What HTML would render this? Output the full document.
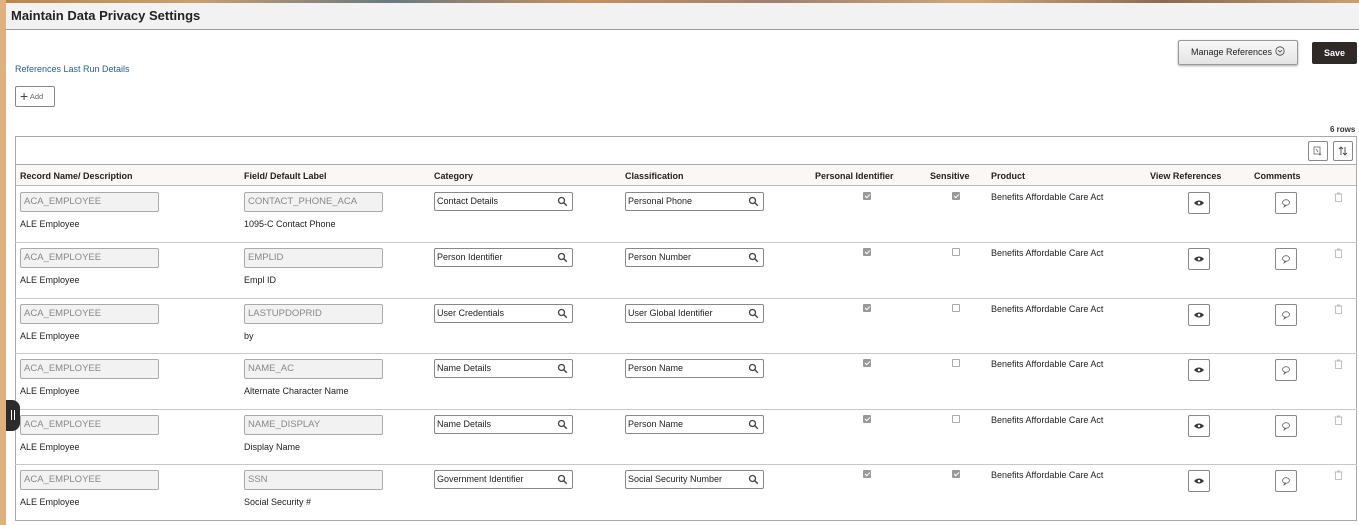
<!DOCTYPE html>
<html><head><meta charset="utf-8"><style>
*{box-sizing:border-box}
body{margin:0;width:1359px;height:525px;overflow:hidden;background:#fff;font-family:"Liberation Sans",Arial,sans-serif;font-size:9px;color:#222;position:relative}
.a{position:absolute}
.strip{left:0;top:0;width:6px;height:525px;background:#deb27e}
.topimg{left:0;top:0;width:1359px;height:3px;background:linear-gradient(90deg,#b8864a,#c9a070,#6a7a80,#c49060,#a08070,#d0a878,#8a6a50,#c8a070)}
.hdr{left:6px;top:3px;width:1353px;height:27px;background:#f2f2f2;border-bottom:1px solid #9a9a9a}
.title{left:11px;top:8px;font-size:13px;font-weight:bold;color:#222}
.inp{position:absolute;height:20px;border:1px solid #aaa;border-radius:2px;background:#f2f2f2;color:#888;font-size:9.5px;padding:3px 3px;width:139px}
.sel{position:absolute;height:19px;border:1px solid #888;border-radius:2px;background:#fff;color:#222;font-size:9px;padding:3px 2px;width:139px}
.sel svg{position:absolute;right:4px;top:3px}
.cb{position:absolute;width:8px;height:8px;border:1px solid #aaa;border-radius:1px;background:#fff}
.cb.on{background:#999;border-color:#999}
.cb.on:after{content:"";position:absolute;left:2px;top:0px;width:2px;height:4px;border:solid #fff;border-width:0 1px 1px 0;transform:rotate(45deg)}
.btn{position:absolute;width:22px;height:22px;border:1px solid #888;border-radius:2px;background:#fff}
.th{position:absolute;top:171px;font-weight:bold;font-size:9px;color:#222}
.line{position:absolute;left:15px;width:1342px;height:1px;background:#c8c8c8}
</style></head><body>
<div class="a topimg"></div>
<div class="a strip"></div>
<div class="a hdr"></div>
<div class="a title">Maintain Data Privacy Settings</div>
<div class="a" style="left:1178px;top:40px;width:120px;height:25px;border:1px solid #999;border-radius:2px;background:linear-gradient(#f8f8f8,#e4e4e4);box-shadow:0 1px 2px #aaa;font-size:9px;padding:5px 0 0 12px;white-space:nowrap">Manage References <svg width="10" height="10" viewBox="0 0 10 10" style="vertical-align:-1px"><circle cx="5" cy="5" r="4.2" fill="none" stroke="#444" stroke-width="0.8"/><path d="M3 4.2l2 2 2-2" fill="none" stroke="#444" stroke-width="0.8"/></svg></div>
<div class="a" style="left:1312px;top:42px;width:45px;height:22px;background:#2f2a27;border-radius:2px;color:#fff;font-weight:bold;font-size:9px;text-align:center;line-height:22px">Save</div>
<div class="a" style="left:15px;top:64px;color:#2a5d8c;font-size:9px">References Last Run Details</div>
<div class="a" style="left:15px;top:86px;width:40px;height:21px;border:1px solid #888;border-radius:2px;font-size:7.5px;color:#666;padding:4px 0 0 4px"><span style="font-size:14px;color:#444;vertical-align:-2px;line-height:10px">+</span> Add</div>
<div class="a" style="left:1330px;top:125px;font-size:8px;font-weight:bold;color:#333">6 rows</div>
<div class="a" style="left:15px;top:136px;width:1342px;height:385px;border:1px solid #aaa;border-top:1px solid #aaa"></div>
<div class="a" style="left:16px;top:164px;width:1340px;height:22px;background:#faf8f6;border-top:1px solid #aaa;border-bottom:1px solid #bbb"></div>
<div class="btn" style="left:1308px;top:141px;width:20px;height:20px"><svg width="18" height="18" viewBox="0 0 18 18"><rect x="5" y="5" width="6" height="7" fill="none" stroke="#666" stroke-width="0.8"/><path d="M7 7l2 3M11 10v3M10 12l1 1 1-1" stroke="#666" fill="none" stroke-width="0.8"/></svg></div>
<div class="btn" style="left:1333px;top:141px;width:20px;height:20px"><svg width="18" height="18" viewBox="0 0 18 18"><path d="M7 5v8M5 7l2-2 2 2M11 5v8M9 11l2 2 2-2" stroke="#444" fill="none" stroke-width="0.9"/></svg></div>
<div class="th" style="left:20px">Record Name/ Description</div>
<div class="th" style="left:244px">Field/ Default Label</div>
<div class="th" style="left:434px">Category</div>
<div class="th" style="left:625px">Classification</div>
<div class="th" style="left:815px">Personal Identifier</div>
<div class="th" style="left:930px">Sensitive</div>
<div class="th" style="left:991px">Product</div>
<div class="th" style="left:1150px">View References</div>
<div class="th" style="left:1254px">Comments</div>
<div id="rows"></div>
<div class="a" style="left:6px;top:400px;width:14px;height:31px;background:#2b2b2b;border-radius:0 8px 8px 0"><div style="position:absolute;left:5px;top:10px;width:1px;height:10px;background:#fff"></div><div style="position:absolute;left:8px;top:10px;width:1px;height:10px;background:#fff"></div></div>
<script>
var d=[["CONTACT_PHONE_ACA","1095-C Contact Phone","Contact Details","Personal Phone",1],
["EMPLID","Empl ID","Person Identifier","Person Number",0],
["LASTUPDOPRID","by","User Credentials","User Global Identifier",0],
["NAME_AC","Alternate Character Name","Name Details","Person Name",0],
["NAME_DISPLAY","Display Name","Name Details","Person Name",0],
["SSN","Social Security #","Government Identifier","Social Security Number",1]];
var mag='<svg width="11" height="11" viewBox="0 0 11 11"><circle cx="4.5" cy="4.5" r="3" fill="none" stroke="#444" stroke-width="1.3"/><path d="M6.8 6.8l3 3" stroke="#444" stroke-width="1.4"/></svg>';
var h='';var tops=[186,242,298,353,409,464];
for(var i=0;i<6;i++){var t=tops[i];
if(i>0)h+='<div class="line" style="top:'+t+'px"></div>';
h+='<div class="inp" style="left:20px;top:'+(t+6)+'px">ACA_EMPLOYEE</div>';
h+='<div class="a" style="left:20px;top:'+(t+33)+'px">ALE Employee</div>';
h+='<div class="inp" style="left:244px;top:'+(t+6)+'px">'+d[i][0]+'</div>';
h+='<div class="a" style="left:244px;top:'+(t+33)+'px">'+d[i][1]+'</div>';
h+='<div class="sel" style="left:434px;top:'+(t+6)+'px">'+d[i][2]+mag+'</div>';
h+='<div class="sel" style="left:625px;top:'+(t+6)+'px">'+d[i][3]+mag+'</div>';
h+='<div class="cb on" style="left:863px;top:'+(t+6)+'px"></div>';
h+='<div class="cb'+(d[i][4]?' on':'')+'" style="left:952px;top:'+(t+6)+'px"></div>';
h+='<div class="a" style="left:991px;top:'+(t+6)+'px">Benefits Affordable Care Act</div>';
h+='<div class="btn" style="left:1188px;top:'+(t+6)+'px"><svg width="20" height="20" viewBox="0 0 20 20"><path d="M5 10q5-5 10 0q-5 5-10 0z" fill="#333"/><circle cx="10" cy="10" r="1.3" fill="#fff"/></svg></div>';
h+='<div class="btn" style="left:1275px;top:'+(t+6)+'px"><svg width="20" height="20" viewBox="0 0 20 20"><ellipse cx="10" cy="9.5" rx="3.5" ry="2.8" fill="none" stroke="#666" stroke-width="0.8"/><path d="M8.5 12l-0.5 2 2-1.6" fill="none" stroke="#666" stroke-width="0.8"/></svg></div>';
h+='<svg class="a" style="left:1334px;top:'+(t+6)+'px" width="9" height="10" viewBox="0 0 9 10"><rect x="1.5" y="2" width="6" height="7.5" fill="none" stroke="#bbb" stroke-width="0.9"/><path d="M0.5 2h8M3 1h3" stroke="#bbb" stroke-width="0.9"/></svg>';
}
document.getElementById('rows').innerHTML=h;
</script>
</body></html>
